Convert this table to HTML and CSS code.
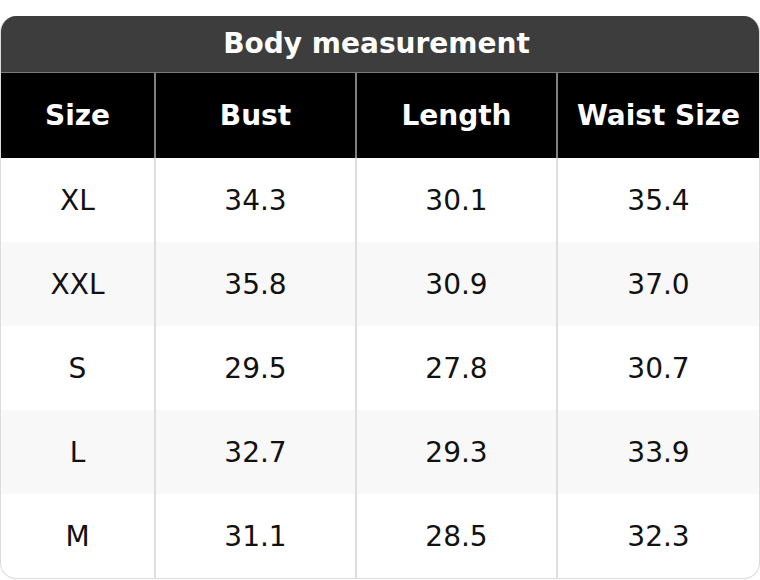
FILE: index.html
```html
<!DOCTYPE html>
<html>
<head>
<meta charset="utf-8">
<link rel="stylesheet" href="styles.css">
</head>
<body>
<div class="card">
  <div class="title">Body measurement</div>
  <table class="sizes">
    <colgroup>
      <col class="c1"><col class="c2"><col class="c3"><col class="c4">
    </colgroup>
    <thead>
      <tr><th>Size</th><th>Bust</th><th>Length</th><th>Waist Size</th></tr>
    </thead>
    <tbody>
      <tr><td>XL</td><td>34.3</td><td>30.1</td><td>35.4</td></tr>
      <tr><td>XXL</td><td>35.8</td><td>30.9</td><td>37.0</td></tr>
      <tr><td>S</td><td>29.5</td><td>27.8</td><td>30.7</td></tr>
      <tr><td>L</td><td>32.7</td><td>29.3</td><td>33.9</td></tr>
      <tr><td>M</td><td>31.1</td><td>28.5</td><td>32.3</td></tr>
    </tbody>
  </table>
</div>
</body>
</html>
```

FILE: styles.css
```css
html, body {
  margin: 0;
  padding: 0;
  background: #fff;
}
body {
  font-family: "DejaVu Sans", sans-serif;
}
.card {
  margin-top: 16px;
  width: 760px;
  box-sizing: border-box;
  border: 1px solid #dcdcdc;
  border-top: none;
  border-radius: 16px;
  overflow: hidden;
}
.title {
  height: 56px;
  background: #3d3d3d;
  border-bottom: 1px solid #7a7a7a;
  color: #fff;
  font-weight: bold;
  font-size: 28px;
  line-height: 56px;
  text-align: center;
  padding-right: 7px;
}
.sizes {
  width: 100%;
  border-collapse: collapse;
  table-layout: fixed;
}
.c1 { width: 154px; }
.c2 { width: 201px; }
.c3 { width: 201px; }
.sizes th {
  background: #000;
  color: #fff;
  font-weight: bold;
  font-size: 28px;
  height: 85px;
  padding: 0;
  border-left: 2px solid #808080;
}
.sizes th:first-child,
.sizes td:first-child {
  border-left: none;
}
.sizes td {
  height: 84px;
  padding: 0;
  text-align: center;
  font-size: 28px;
  color: #111;
  border-left: 2px solid #dedede;
}
.sizes tbody tr:nth-child(even) td {
  background: #f8f8f8;
}
```
